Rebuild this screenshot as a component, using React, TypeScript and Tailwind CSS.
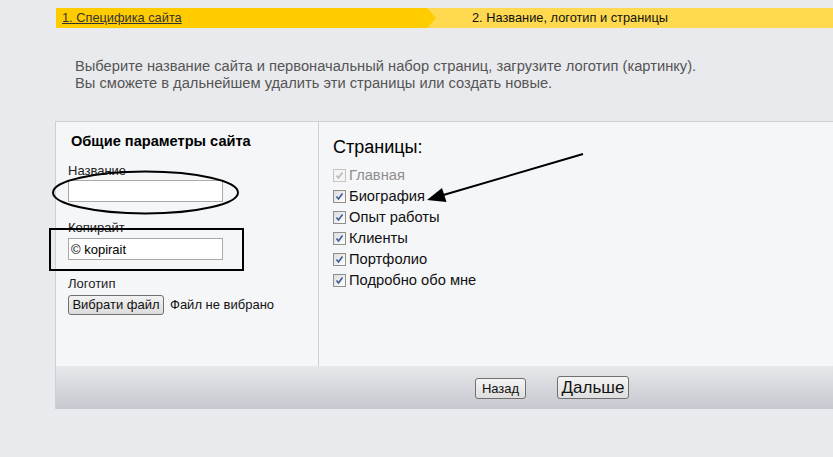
import React from 'react';

const pages = [
  { name: 'Главная', disabled: true },
  { name: 'Биография' },
  { name: 'Опыт работы' },
  { name: 'Клиенты' },
  { name: 'Портфолио' },
  { name: 'Подробно обо мне' },
];

const Check = ({ disabled }: { disabled?: boolean }) => (
  <span
    className={`w-[13px] h-[13px] border flex items-center justify-center shrink-0 ${
      disabled ? 'border-[#c4c4c4] bg-[#f4f4f4]' : 'border-[#8e8f8f] bg-gradient-to-br from-[#dcdcdc] to-white'
    }`}
  >
    <svg width="9" height="9" viewBox="0 0 9 9">
      <path
        d="M1.5 4.5 L3.5 7 L7.5 1.5"
        fill="none"
        stroke={disabled ? '#b8b8b8' : '#3d5b97'}
        strokeWidth="1.6"
      />
    </svg>
  </span>
);

export default function App() {
  return (
    <div className="relative w-[833px] h-[457px] overflow-hidden bg-[#e9eaed] font-['Liberation_Sans',Arial,sans-serif]">
      {/* steps bar */}
      <div className="h-2" />
      <div className="ml-[56px] flex h-5 bg-[#ffd94f] text-[12.8px] leading-5">
        <div className="w-[380px] bg-[#ffcc00] pl-[6px] [clip-path:polygon(0_0,371px_0,380px_50%,371px_100%,0_100%)]">
          <a href="#" className="text-[#333] underline">1. Специфика сайта</a>
        </div>
        <div className="pl-[36px] text-[#111]">2. Название, логотип и страницы</div>
      </div>

      <p className="mt-[30px] ml-[75px] text-[14.7px] leading-[17px] text-[#555]">
        Выберите название сайта и первоначальный набор страниц, загрузите логотип (картинку).
        <br />
        Вы сможете в дальнейшем удалить эти страницы или создать новые.
      </p>

      {/* main panel */}
      <div className="mt-[29px] ml-[55px] border-t border-l border-[#cfd0d5] bg-[#f5f6f8]">
        <div className="flex h-[244px]">
          <div className="w-[263px] border-r border-[#cfd0d5] pl-[12px] pt-[10px]">
            <h3 className="pl-[3px] text-[14.6px] font-bold leading-[18px] text-black">Общие параметры сайта</h3>
            <div className="mt-[13px] text-[13px] leading-[15px] text-[#222]">Название</div>
            <input className="mt-[2px] block w-[155px] h-[22px] border border-[#a9a9a9] bg-white px-1 text-[13px]" />
            <div className="mt-[18px] text-[13px] leading-[15px] text-[#222]">Копирайт</div>
            <input
              defaultValue="© kopirait"
              className="mt-[3px] block w-[155px] h-[22px] border border-[#a9a9a9] bg-white px-[2px] text-[13px] text-black outline-none"
            />
            <div className="mt-[16px] text-[13px] leading-[15px] text-[#222]">Логотип</div>
            <div className="mt-[4px] flex items-center gap-[6px] text-[13px] text-[#111]">
              <button className="h-[20px] w-[96px] rounded-[3px] border border-[#707070] bg-gradient-to-b from-[#f2f2f2] to-[#dcdcdc] text-[13px] leading-[18px]">
                Вибрати файл
              </button>
              <span>Файл не вибрано</span>
            </div>
          </div>

          <div className="flex-1 pl-[14px] pt-[15px]">
            <h3 className="text-[18px] leading-[20px] text-black">Страницы:</h3>
            <ul className="mt-[8px]">
              {pages.map((p) => (
                <li key={p.name} className="flex h-[21px] items-center gap-[3px] text-[14.7px]">
                  <Check disabled={p.disabled} />
                  <span className={p.disabled ? 'text-[#8d8d8d]' : 'text-[#111]'}>{p.name}</span>
                </li>
              ))}
            </ul>
          </div>
        </div>

        <div className="flex h-[43px] items-center bg-gradient-to-b from-[#e7e8eb] to-[#c7c8cf] pl-[419px]">
          <button className="mt-[2px] h-[21px] w-[51px] rounded-[3px] border border-[#707070] bg-gradient-to-b from-[#f4f4f4] to-[#dedede] text-[13px] leading-[19px] text-[#111]">
            Назад
          </button>
          <button className="ml-[31px] h-[23px] w-[72px] rounded-[3px] border border-[#707070] bg-gradient-to-b from-[#f4f4f4] to-[#dedede] text-[17px] leading-[21px] text-[#111]">
            Дальше
          </button>
        </div>
      </div>

      {/* annotations drawn over the screenshot */}
      <svg className="pointer-events-none absolute left-0 top-0" width="833" height="457">
        <ellipse cx="145.5" cy="192.5" rx="92.5" ry="21" fill="none" stroke="#000" strokeWidth="2" />
        <rect x="50" y="229" width="193" height="41" fill="none" stroke="#000" strokeWidth="2" />
        <line x1="583" y1="154" x2="440" y2="196" stroke="#000" strokeWidth="2" />
        <polygon points="427,200 442,188 446.5,202" fill="#000" />
      </svg>
    </div>
  );
}
